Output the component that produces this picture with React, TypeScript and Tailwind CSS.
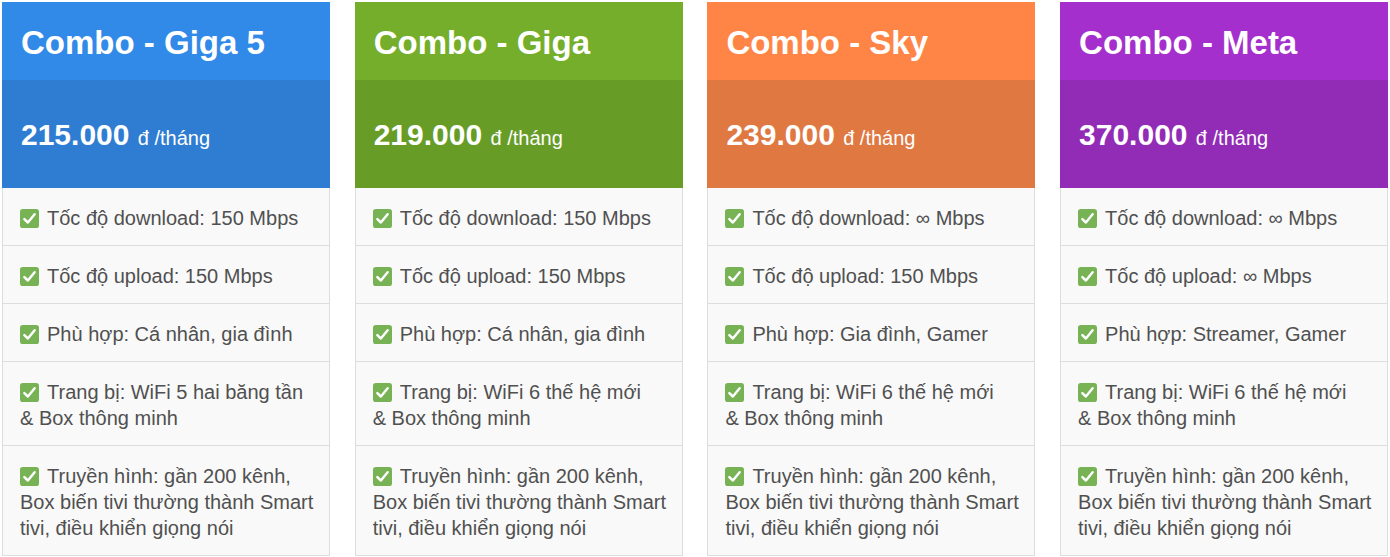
import React from "react";

type Plan = {
  title: string;
  price: string;
  head: string;
  priceBg: string;
  rows: React.ReactNode[];
};

const Check = () => (
  <svg
    width="19"
    height="19"
    viewBox="0 0 20 20"
    className="inline-block align-[-3px] mr-[8px]"
  >
    <rect x="0" y="0" width="20" height="20" rx="3" fill="#77b255" />
    <path
      d="M4.6 10.6 L8.3 14.2 L15.4 5.6"
      fill="none"
      stroke="#ffffff"
      strokeWidth="2.6"
      strokeLinecap="round"
      strokeLinejoin="round"
    />
  </svg>
);

const plans: Plan[] = [
  {
    title: "Combo - Giga 5",
    price: "215.000",
    head: "bg-[#3189e8]",
    priceBg: "bg-[#2f7dd2]",
    rows: [
      "Tốc độ download: 150 Mbps",
      "Tốc độ upload: 150 Mbps",
      "Phù hợp: Cá nhân, gia đình",
      <>Trang bị: WiFi 5 hai băng tần<br />&amp; Box thông minh</>,
      <>Truyền hình: gần 200 kênh,<br />Box biến tivi thường thành Smart<br />tivi, điều khiển giọng nói</>,
    ],
  },
  {
    title: "Combo - Giga",
    price: "219.000",
    head: "bg-[#75ae2b]",
    priceBg: "bg-[#679d26]",
    rows: [
      "Tốc độ download: 150 Mbps",
      "Tốc độ upload: 150 Mbps",
      "Phù hợp: Cá nhân, gia đình",
      <>Trang bị: WiFi 6 thế hệ mới<br />&amp; Box thông minh</>,
      <>Truyền hình: gần 200 kênh,<br />Box biến tivi thường thành Smart<br />tivi, điều khiển giọng nói</>,
    ],
  },
  {
    title: "Combo - Sky",
    price: "239.000",
    head: "bg-[#ff8547]",
    priceBg: "bg-[#e07842]",
    rows: [
      "Tốc độ download: ∞ Mbps",
      "Tốc độ upload: 150 Mbps",
      "Phù hợp: Gia đình, Gamer",
      <>Trang bị: WiFi 6 thế hệ mới<br />&amp; Box thông minh</>,
      <>Truyền hình: gần 200 kênh,<br />Box biến tivi thường thành Smart<br />tivi, điều khiển giọng nói</>,
    ],
  },
  {
    title: "Combo - Meta",
    price: "370.000",
    head: "bg-[#a42fcd]",
    priceBg: "bg-[#922bb6]",
    rows: [
      "Tốc độ download: ∞ Mbps",
      "Tốc độ upload: ∞ Mbps",
      "Phù hợp: Streamer, Gamer",
      <>Trang bị: WiFi 6 thế hệ mới<br />&amp; Box thông minh</>,
      <>Truyền hình: gần 200 kênh,<br />Box biến tivi thường thành Smart<br />tivi, điều khiển giọng nói</>,
    ],
  },
];

export default function App() {
  return (
    <div className="w-[1390px] h-[557px] bg-white overflow-hidden pt-[2px] pl-[2px] font-['Liberation_Sans',Arial,sans-serif]">
      <div className="grid grid-cols-[repeat(4,328px)] gap-[24.7px]">
        {plans.map((p) => (
          <div key={p.title} className="flex flex-col">
            <div className={`${p.head} h-[78px] flex items-center pt-[3px] px-[19px]`}>
              <span className="text-white font-bold text-[33px] leading-[38px] whitespace-nowrap">
                {p.title}
              </span>
            </div>
            <div className={`${p.priceBg} h-[108px] flex items-center px-[19px]`}>
              <span className="text-white whitespace-nowrap">
                <span className="font-bold text-[30px]">{p.price} </span>
                <span className="text-[20px]">đ /tháng</span>
              </span>
            </div>
            <div className="border-x border-b border-[#dddddd] bg-[#f9f9f9]">
              {p.rows.map((r, i) => (
                <div
                  key={i}
                  className={`pl-[17px] pr-[10px] pt-[17px] pb-[14px] text-[20px] leading-[26px] text-[#505050] ${
                    i < p.rows.length - 1 ? "border-b border-[#dddddd]" : ""
                  }`}
                >
                  <Check />
                  {r}
                </div>
              ))}
            </div>
          </div>
        ))}
      </div>
    </div>
  );
}
